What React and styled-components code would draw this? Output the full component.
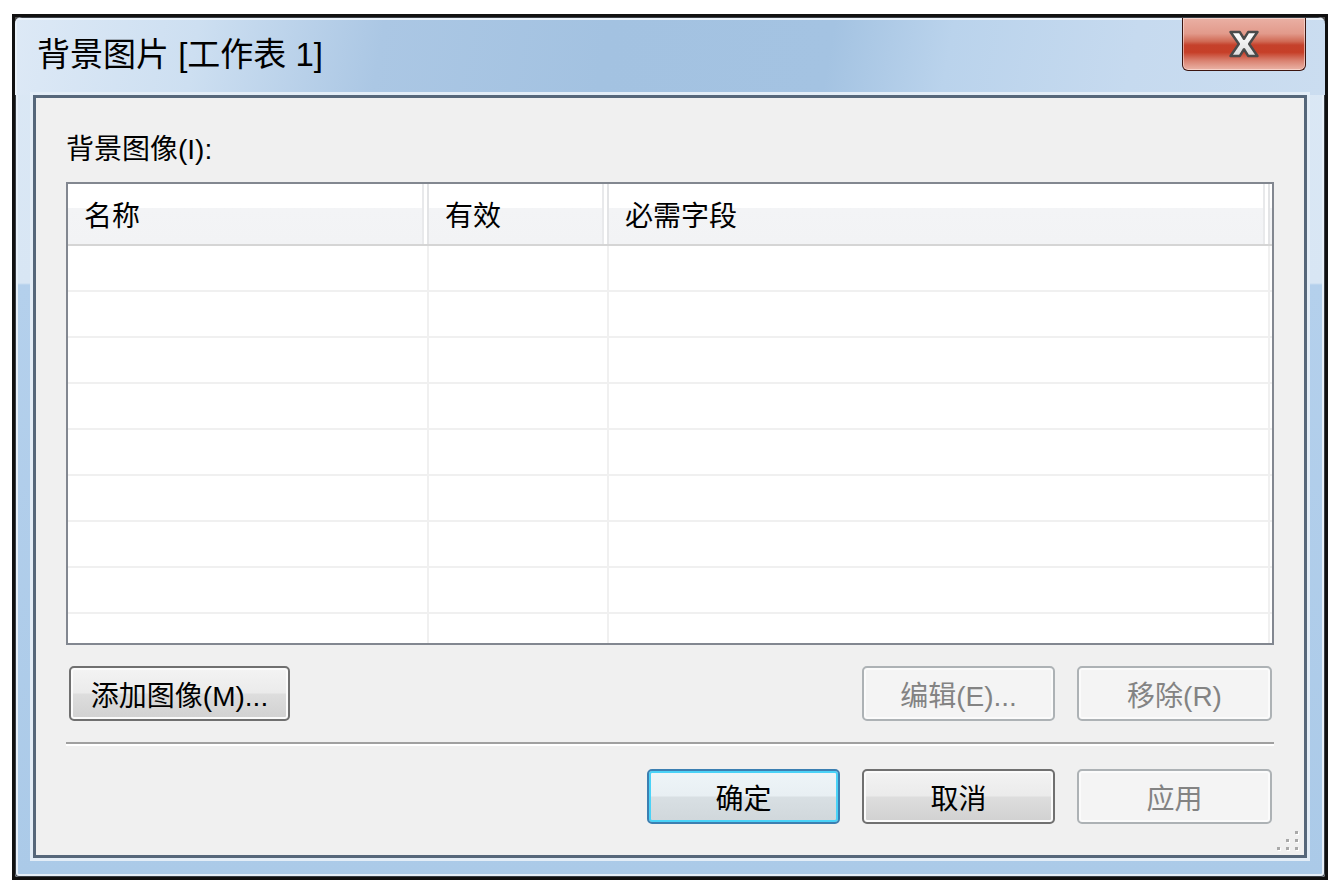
import React from 'react';
import styled, { createGlobalStyle } from 'styled-components';

const GlobalStyle = createGlobalStyle`
  html, body {
    margin: 0;
    padding: 0;
    background: #ffffff;
  }
  body {
    font-family: "Liberation Sans", "Noto Sans CJK SC", sans-serif;
    color: #000;
  }
`;

// Outer window: dark frame around the aero border
const Window = styled.div`
  margin: 14px 0 0 12px;
  width: 1316px;
  height: 866px;
  box-sizing: border-box;
  border: 3px solid #101010;
  background: #4b4b4b;
`;

const Frame = styled.div`
  height: 100%;
  display: flex;
  flex-direction: column;
  border-radius: 7px 7px 4px 4px;
  overflow: hidden;
  background: linear-gradient(
    180deg,
    #dbe8f5 0,
    #d8e6f4 266px,
    #b4d0ec 268px,
    #abcae8 100%
  );
  box-shadow: inset 0 0 0 1px #3a3f45, inset 0 0 0 3px #e6eff8;
`;

const TitleBar = styled.div`
  height: 78px;
  flex: none;
  display: flex;
  align-items: flex-start;
  justify-content: space-between;
  background: linear-gradient(
    100deg,
    #dde9f6 0%,
    #cddff1 14%,
    #abc7e4 28%,
    #a3c2e1 45%,
    #a4c3e2 62%,
    #bad3ec 71%,
    #c6daef 85%,
    #cbddf0 100%
  );
  box-shadow: inset 0 1px 0 #3a3f45, inset 0 3px 0 #e9f1f9, inset 2px 0 0 #e9f1f9;
`;

const Title = styled.div`
  padding: 19px 0 0 22px;
  font-size: 33px;
  line-height: 38px;
  white-space: pre;
`;

const CloseButton = styled.div`
  width: 124px;
  height: 53px;
  margin: 1px 19px 0 0;
  box-sizing: border-box;
  display: flex;
  align-items: center;
  justify-content: center;
  border: 1px solid #3b1510;
  border-top: none;
  border-radius: 0 0 6px 6px;
  background: linear-gradient(
    180deg,
    #eab0a4 0%,
    #e29a8b 30%,
    #d06a55 45%,
    #c5412b 52%,
    #c63f28 66%,
    #d98170 82%,
    #ebb5a8 100%
  );
  box-shadow: inset 0 0 0 1px rgba(255, 235, 230, 0.55);
`;

const Panel = styled.div`
  position: relative;
  flex: 1;
  margin: 0 18px 19px;
  box-sizing: border-box;
  border: 3px solid #56677a;
  background: #f0f0f0;
  box-shadow: 0 0 0 3px #e3edf7;
  padding: 0 30px;
  display: flex;
  flex-direction: column;
`;

const Label = styled.div`
  height: 84px;
  box-sizing: border-box;
  padding-top: 14px;
  display: flex;
  align-items: center;
  font-size: 28px;
`;

const Table = styled.div`
  height: 463px;
  box-sizing: border-box;
  border: 2px solid #828790;
  background: #ffffff;
  overflow: hidden;
`;

const Row = styled.div`
  display: grid;
  grid-template-columns: 361px 180px 661px 1fr;
  height: ${(p) => (p.$header ? 62 : 46)}px;
  box-sizing: border-box;
  border-bottom: 2px solid ${(p) => (p.$header ? '#d5d5d5' : '#f0f0f0')};
  background: ${(p) =>
    p.$header
      ? 'linear-gradient(180deg, #ffffff 0, #ffffff 24px, #f3f4f6 24px, #f2f3f5 100%)'
      : '#ffffff'};
`;

const Cell = styled.div`
  display: flex;
  align-items: center;
  padding-left: 16px;
  box-sizing: border-box;
  font-size: 28px;
  border-right: ${(p) => (p.$last ? 'none' : `2px solid ${p.$header ? '#e3e4e6' : '#f0f0f0'}`)};
  box-shadow: ${(p) => (p.$header && !p.$last ? 'inset -3px 0 0 #ffffff, inset -5px 0 0 #e8e9eb' : 'none')};
`;

const ButtonRow = styled.div`
  display: flex;
  align-items: center;
  margin-top: ${(p) => p.$top}px;
  padding: 0 2px 0 3px;
  gap: 22px;
`;

const Spacer = styled.div`
  flex: 1;
`;

const Separator = styled.div`
  margin-top: 21px;
  height: 2px;
  background: #a0a0a0;
  border-bottom: 2px solid #ffffff;
`;

const Button = styled.div`
  width: ${(p) => p.$w}px;
  height: 55px;
  box-sizing: border-box;
  display: flex;
  align-items: center;
  justify-content: center;
  font-size: 28px;
  border-radius: 5px;
  border: 2px solid ${(p) => (p.$default ? '#3c7fb1' : p.$disabled ? '#adb2b5' : '#707070')};
  color: ${(p) => (p.$disabled ? '#838383' : '#000000')};
  background: ${(p) =>
    p.$disabled
      ? '#f4f4f4'
      : p.$default
      ? 'linear-gradient(180deg, #eef5f8 0%, #e8eff3 48%, #d8dfe3 52%, #d0d7db 100%)'
      : 'linear-gradient(180deg, #f3f3f3 0%, #ebebeb 48%, #dddddd 52%, #d1d1d1 100%)'};
  box-shadow: ${(p) =>
    p.$default
      ? 'inset 0 0 0 2px #4ad2f7'
      : 'inset 0 0 0 2px #fbfbfb'};
`;

const Grip = styled.svg`
  position: absolute;
  right: 5px;
  bottom: 4px;
`;

const CloseIcon = () => (
  <svg width="34" height="28" viewBox="0 0 32 27">
    <defs>
      <linearGradient id="xg" x1="0" y1="0" x2="0" y2="1">
        <stop offset="0" stopColor="#ffffff" />
        <stop offset="1" stopColor="#dcdcdc" />
      </linearGradient>
    </defs>
    <polygon
      points="3,2 12,2 16,8.5 20,2 29,2 21,13.5 29,25 20,25 16,18.5 12,25 3,25 11,13.5"
      fill="url(#xg)"
      stroke="#4a4a4a"
      strokeWidth="2.4"
      strokeLinejoin="round"
    />
  </svg>
);

const ResizeGrip = () => (
  <Grip width="22" height="22" viewBox="0 0 22 22">
    {[
      [18, 2],
      [9, 10],
      [18, 10],
      [0, 18],
      [9, 18],
      [18, 18],
    ].map(([x, y]) => (
      <g key={`${x}-${y}`}>
        <rect x={x + 1} y={y + 1} width="3" height="3" fill="#ffffff" />
        <rect x={x} y={y} width="3" height="3" fill="#a9a9a9" />
      </g>
    ))}
  </Grip>
);

const columns = ['名称', '有效', '必需字段', ''];

const App = () => (
  <>
    <GlobalStyle />
    <Window>
      <Frame>
        <TitleBar>
          <Title>背景图片 [工作表 1]</Title>
          <CloseButton>
            <CloseIcon />
          </CloseButton>
        </TitleBar>
        <Panel>
          <Label>背景图像(I):</Label>
          <Table>
            <Row $header>
              {columns.map((c, i) => (
                <Cell key={i} $header $last={i === 3}>
                  {c}
                </Cell>
              ))}
            </Row>
            {Array.from({ length: 9 }).map((_, r) => (
              <Row key={r}>
                {columns.map((c, i) => (
                  <Cell key={i} $last={i === 3} />
                ))}
              </Row>
            ))}
          </Table>
          <ButtonRow $top={21}>
            <Button $w={221}>添加图像(M)...</Button>
            <Spacer />
            <Button $w={193} $disabled>
              编辑(E)...
            </Button>
            <Button $w={195} $disabled>
              移除(R)
            </Button>
          </ButtonRow>
          <Separator />
          <ButtonRow $top={23}>
            <Spacer />
            <Button $w={193} $default>
              确定
            </Button>
            <Button $w={193}>取消</Button>
            <Button $w={195} $disabled>
              应用
            </Button>
          </ButtonRow>
          <ResizeGrip />
        </Panel>
      </Frame>
    </Window>
  </>
);

export default App;
